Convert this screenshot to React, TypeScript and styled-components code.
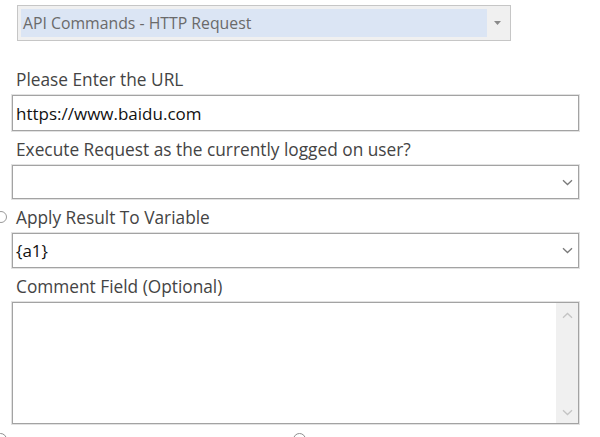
import React from 'react';
import styled, { createGlobalStyle } from 'styled-components';

const GlobalStyle = createGlobalStyle`
  html, body {
    margin: 0;
    padding: 0;
    background: #ffffff;
    overflow: hidden;
  }
  body {
    font-family: "Open Sans", "Noto Sans", "Liberation Sans", sans-serif;
  }
`;

const Page = styled.div`
  width: 600px;
  height: 437px;
  overflow: hidden;
  position: relative;
  background: #fff;
`;

const Form = styled.div`
  display: flex;
  flex-direction: column;
  padding: 5px 0 0 12px;
  width: 567px;
`;

const CommandSelect = styled.div`
  margin-left: 5px;
  width: 494px;
  height: 36px;
  box-sizing: border-box;
  border: 1px solid #c6c6c6;
  background: #f0f0f0;
  display: flex;
  align-items: stretch;
  padding: 3px;
`;

const CommandValue = styled.div`
  flex: 1;
  background: #dbe5f4;
  color: #6a6a6a;
  font-size: 15.8px;
  line-height: 28px;
  padding-left: 2px;
  white-space: nowrap;
`;

const CommandArrow = styled.div`
  width: 20px;
  display: flex;
  align-items: center;
  justify-content: center;
`;

const Label = styled.div<{ $top?: number }>`
  position: relative;
  padding: ${p => p.$top ?? 7}px 0 3px 4px;
  line-height: 24px;
  font-size: 17.3px;
  color: #444444;
  white-space: nowrap;
`;

const Field = styled.div<{ $h: number }>`
  height: ${p => p.$h}px;
  box-sizing: border-box;
  border: 1px solid #a3a3a3;
  box-shadow: 0 0 0 1px #e2e2e2;
  background: #fff;
  display: flex;
  align-items: center;
  padding-left: 3px;
  font-size: 17px;
  color: #111;
`;

const FieldText = styled.span`
  flex: 1;
  white-space: nowrap;
`;

const Chevron = styled.div`
  width: 22px;
  display: flex;
  align-items: center;
  justify-content: center;
`;

const TextArea = styled.div`
  height: 122px;
  box-sizing: border-box;
  border: 1px solid #a3a3a3;
  box-shadow: 0 0 0 1px #e2e2e2;
  background: #fff;
  display: flex;
  justify-content: flex-end;
`;

const ScrollBar = styled.div`
  width: 22px;
  background: #f0f0f0;
  display: flex;
  flex-direction: column;
  justify-content: space-between;
  align-items: center;
  padding: 9px 0 7px;
`;

const RadioStub = styled.span`
  position: absolute;
  left: -17px;
  top: 12px;
  width: 10px;
  height: 10px;
  border: 1px solid #9a9a9a;
  border-radius: 50%;
`;

const BottomRow = styled.div`
  display: flex;
  padding-top: 9px;
`;

const Knob = styled.span<{ $ml: number }>`
  margin-left: ${p => p.$ml}px;
  width: 11px;
  height: 11px;
  border: 1px solid #8f8f8f;
  border-radius: 50%;
  flex-shrink: 0;
`;

const Chev = ({ up = false, color = '#7a7a7a' }: { up?: boolean; color?: string }) => (
  <svg width="11" height="7" viewBox="0 0 11 7">
    <path
      d={up ? 'M1 5.8 L5.5 1.5 L10 5.8' : 'M1 1.2 L5.5 5.5 L10 1.2'}
      fill="none"
      stroke={color}
      strokeWidth="1.3"
    />
  </svg>
);

const SmallTriangle = () => (
  <svg width="7" height="4" viewBox="0 0 7 4">
    <path d="M0 0 L7 0 L3.5 4 Z" fill="#8a8a8a" />
  </svg>
);

export default function App() {
  return (
    <Page>
      <GlobalStyle />
      <Form>
        <CommandSelect>
          <CommandValue>API Commands - HTTP Request</CommandValue>
          <CommandArrow>
            <SmallTriangle />
          </CommandArrow>
        </CommandSelect>

        <Label $top={27}>Please Enter the URL</Label>
        <Field $h={36}>
          <FieldText>https://www.baidu.com</FieldText>
        </Field>

        <Label>Execute Request as the currently logged on user?</Label>
        <Field $h={34}>
          <FieldText />
          <Chevron>
            <Chev />
          </Chevron>
        </Field>

        <Label>
          <RadioStub />
          Apply Result To Variable
        </Label>
        <Field $h={35}>
          <FieldText>{'{a1}'}</FieldText>
          <Chevron>
            <Chev />
          </Chevron>
        </Field>

        <Label>Comment Field (Optional)</Label>
        <TextArea>
          <ScrollBar>
            <Chev up color="#c4c4c4" />
            <Chev color="#c4c4c4" />
          </ScrollBar>
        </TextArea>

        <BottomRow>
          <Knob $ml={-18} />
          <Knob $ml={286} />
        </BottomRow>
      </Form>
    </Page>
  );
}
